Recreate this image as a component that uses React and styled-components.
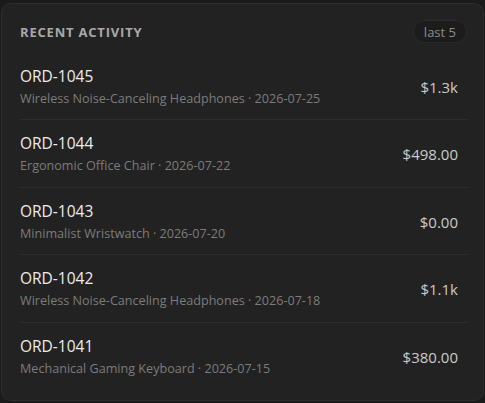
import React from 'react';
import styled, { createGlobalStyle } from 'styled-components';

const GlobalStyle = createGlobalStyle`
  html, body {
    margin: 0;
    background: #1b1b1b;
  }
  body {
    font-family: "Open Sans", "Noto Sans", sans-serif;
  }
`;

const orders = [
  { id: 'ORD-1045', product: 'Wireless Noise-Canceling Headphones', date: '2026-07-25', total: '$1.3k' },
  { id: 'ORD-1044', product: 'Ergonomic Office Chair', date: '2026-07-22', total: '$498.00' },
  { id: 'ORD-1043', product: 'Minimalist Wristwatch', date: '2026-07-20', total: '$0.00' },
  { id: 'ORD-1042', product: 'Wireless Noise-Canceling Headphones', date: '2026-07-18', total: '$1.1k' },
  { id: 'ORD-1041', product: 'Mechanical Gaming Keyboard', date: '2026-07-15', total: '$380.00' },
];

const App = () => {
  return (
    <>
      <GlobalStyle />
      <Page>
        <Card>
          <Header>
            <Title>Recent Activity</Title>
            <Badge>last 5</Badge>
          </Header>
          <List>
            {orders.map((o) => (
              <Row key={o.id}>
                <Info>
                  <OrderId>{o.id}</OrderId>
                  <Meta>{o.product} · {o.date}</Meta>
                </Info>
                <Amount>{o.total}</Amount>
              </Row>
            ))}
          </List>
        </Card>
      </Page>
    </>
  );
};

const Page = styled.div`
  padding: 3px 1px 2px 1px;
`;

const Card = styled.section`
  box-sizing: border-box;
  height: 398px;
  background: #222222;
  border: 1px solid #2e2e2e;
  border-radius: 10px;
  padding: 16px 15px 12px 18px;
  display: flex;
  flex-direction: column;
`;

const Header = styled.header`
  display: flex;
  align-items: center;
  justify-content: space-between;
  height: 23px;
  margin-bottom: 10px;
`;

const Title = styled.h2`
  margin: 0;
  font-size: 13px;
  font-weight: 700;
  letter-spacing: 0.8px;
  text-transform: uppercase;
  color: #a9a9a9;
`;

const Badge = styled.span`
  box-sizing: border-box;
  height: 23px;
  padding: 0 10px;
  display: inline-flex;
  align-items: center;
  border-radius: 12px;
  background: #1c1c1c;
  border: 1px solid #2a2a2a;
  color: #8c8c8c;
  font-size: 13px;
  margin-right: 1px;
`;

const List = styled.div`
  display: flex;
  flex-direction: column;
`;

const Row = styled.div`
  display: flex;
  align-items: center;
  justify-content: space-between;
  padding: 13px 10px 11.4px 0;
  border-bottom: 1px solid #2d2d2d;
  &:last-child {
    border-bottom: none;
  }
`;

const Info = styled.div`
  display: flex;
  flex-direction: column;
  gap: 4px;
`;

const OrderId = styled.div`
  font-size: 15.5px;
  line-height: 20px;
  font-weight: 500;
  color: #ececec;
`;

const Meta = styled.div`
  font-size: 12.6px;
  line-height: 18px;
  color: #7c7c7c;
`;

const Amount = styled.div`
  font-size: 15px;
  color: #cacaca;
`;

export default App;
